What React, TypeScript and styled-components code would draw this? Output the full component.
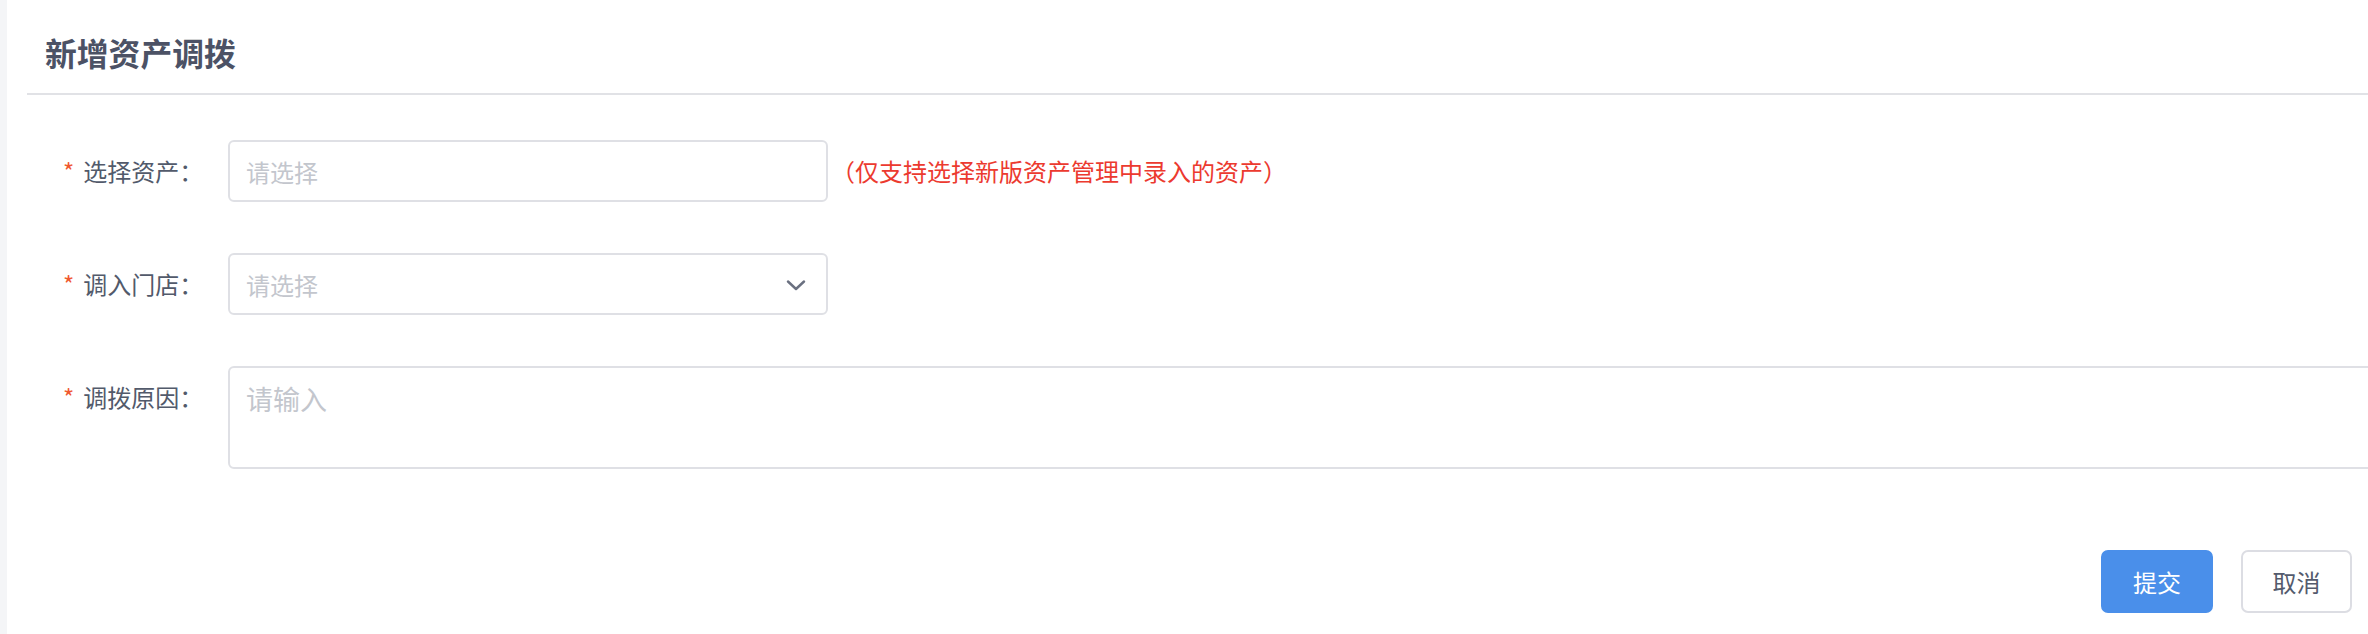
import React from "react";
import styled, { createGlobalStyle } from "styled-components";

const GlobalStyle = createGlobalStyle`
  html, body {
    margin: 0;
    padding: 0;
    background: #f4f5f7;
    overflow: hidden;
  }
  body {
    font-family: "Noto Sans CJK SC", "Noto Sans", sans-serif;
  }
`;

const Card = styled.div`
  margin-left: 7px;
  background: #ffffff;
  min-height: 634px;
  overflow: hidden;
  box-sizing: border-box;
`;

const Header = styled.div`
  margin-left: 20px;
  padding: 29px 0 17px 18px;
  border-bottom: 2px solid #e1e2e6;
`;

const Title = styled.h1`
  margin: 0;
  font-size: 31.8px;
  line-height: 47px;
  font-weight: 700;
  color: #4c5265;
`;

const Form = styled.form`
  padding-top: 45px;
  display: flex;
  flex-direction: column;
  gap: 51px;
`;

const Row = styled.div`
  display: flex;
  align-items: flex-start;
`;

const Label = styled.label`
  flex: 0 0 auto;
  width: 165px;
  padding-left: 56px;
  font-size: 24px;
  line-height: 62px;
  color: #525a6b;
  font-feature-settings: "halt";
  white-space: nowrap;
`;

const Star = styled.span`
  color: #f0582f;
  margin-right: 9px;
`;

const Field = styled.div<{ $wide?: boolean }>`
  position: relative;
  flex: ${(p) => (p.$wide ? "1 1 auto" : "0 0 600px")};
  width: ${(p) => (p.$wide ? "auto" : "600px")};
  margin-right: ${(p) => (p.$wide ? "-40px" : "0")};
`;

const TextInput = styled.input`
  box-sizing: border-box;
  width: 100%;
  height: 62px;
  padding: 0 16px;
  border: 2px solid #dfe0e5;
  border-radius: 6px;
  font-family: inherit;
  font-size: 24px;
  color: #525a6b;
  outline: none;
  background: #fff;
  &::placeholder {
    color: #c3c6cd;
  }
`;

const SelectBox = styled.div`
  box-sizing: border-box;
  width: 100%;
  height: 62px;
  padding: 0 20px 0 16px;
  border: 2px solid #dfe0e5;
  border-radius: 6px;
  display: flex;
  align-items: center;
  justify-content: space-between;
  font-size: 24px;
  background: #fff;
`;

const Placeholder = styled.span`
  color: #c3c6cd;
`;

const Chevron = styled.svg`
  width: 20px;
  height: 11px;
  margin-top: 2px;
`;

const TextArea = styled.textarea`
  box-sizing: border-box;
  display: block;
  width: 100%;
  height: 103px;
  padding: 11px 16px;
  border: 2px solid #dfe0e5;
  border-radius: 6px;
  font-family: inherit;
  font-size: 27px;
  line-height: 40px;
  color: #525a6b;
  outline: none;
  resize: none;
  &::placeholder {
    color: #c3c6cd;
  }
`;

const Note = styled.span`
  margin-left: 15px;
  font-size: 24px;
  line-height: 62px;
  color: #ec3a2f;
  font-feature-settings: "halt";
  white-space: nowrap;
`;

const Actions = styled.div`
  display: flex;
  justify-content: flex-end;
  gap: 28px;
  padding: 81px 16px 21px 0;
`;

const Button = styled.button<{ $primary?: boolean }>`
  box-sizing: border-box;
  width: ${(p) => (p.$primary ? "112px" : "111px")};
  height: 63px;
  border-radius: 7px;
  border: 2px solid ${(p) => (p.$primary ? "#4a8fea" : "#dcdde3")};
  background: ${(p) => (p.$primary ? "#4a8fea" : "#ffffff")};
  color: ${(p) => (p.$primary ? "#ffffff" : "#545b6d")};
  font-family: inherit;
  font-size: 24px;
  cursor: pointer;
  padding: 0;
`;

export default function App() {
  return (
    <>
      <GlobalStyle />
      <Card>
        <Header>
          <Title>新增资产调拨</Title>
        </Header>
        <Form onSubmit={(e) => e.preventDefault()}>
          <Row>
            <Label>
              <Star>*</Star>选择资产：
            </Label>
            <Field>
              <TextInput placeholder="请选择" readOnly />
            </Field>
            <Note>（仅支持选择新版资产管理中录入的资产）</Note>
          </Row>
          <Row>
            <Label>
              <Star>*</Star>调入门店：
            </Label>
            <Field>
              <SelectBox>
                <Placeholder>请选择</Placeholder>
                <Chevron viewBox="0 0 20 11" fill="none">
                  <polyline
                    points="2,1.5 10,9 18,1.5"
                    stroke="#6a7080"
                    strokeWidth="2.4"
                    strokeLinecap="round"
                    strokeLinejoin="round"
                  />
                </Chevron>
              </SelectBox>
            </Field>
          </Row>
          <Row>
            <Label>
              <Star>*</Star>调拨原因：
            </Label>
            <Field $wide>
              <TextArea placeholder="请输入" />
            </Field>
          </Row>
        </Form>
        <Actions>
          <Button $primary type="button">提交</Button>
          <Button type="button">取消</Button>
        </Actions>
      </Card>
    </>
  );
}
